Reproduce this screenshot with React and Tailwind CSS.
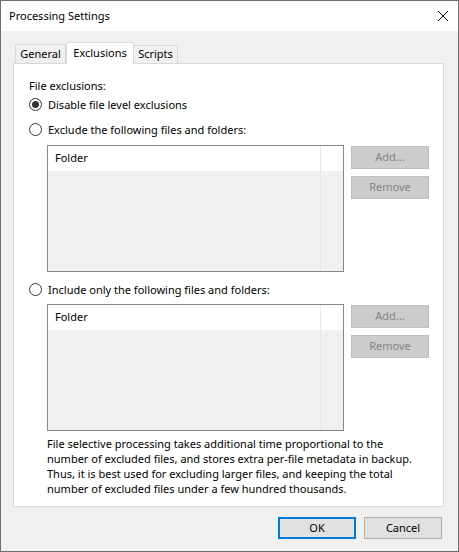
import React from "react";

const font = { fontFamily: '"Noto Sans", "Segoe UI", sans-serif' };

const Radio = ({ checked, label }) => (
  <div className="flex items-center h-[15px]">
    <div className="w-[13px] h-[13px] rounded-full border border-[#333333] bg-white flex items-center justify-center">
      {checked && <div className="w-[7px] h-[7px] rounded-full bg-[#333333]"></div>}
    </div>
    <span className="ml-[6px] leading-[15px]">{label}</span>
  </div>
);

const FolderList = () => (
  <div className="flex">
    <div className="ml-[18px] w-[297px] h-[127px] border border-[#828790] bg-[#f0f0f0] flex">
      <div className="w-[272px] flex flex-col">
        <div className="h-[25px] bg-white flex items-center pl-[7px]">Folder</div>
      </div>
      <div className="w-px bg-[#e3e8ee]"></div>
      <div className="flex-1 flex flex-col">
        <div className="h-[25px] bg-white"></div>
      </div>
    </div>
    <div className="ml-[7px] mt-px flex flex-col gap-[7px]">
      <button className="w-[78px] h-[23px] bg-[#cccccc] border border-[#bfbfbf] text-[#838383]">
        Add...
      </button>
      <button className="w-[78px] h-[23px] bg-[#cccccc] border border-[#bfbfbf] text-[#838383]">
        Remove
      </button>
    </div>
  </div>
);

export default function App() {
  return (
    <div
      className="w-[459px] h-[552px] border border-[#6e6e6e] flex flex-col text-[11px] text-black"
      style={font}
    >
      {/* Title bar */}
      <div className="h-[30px] bg-white flex items-center justify-between pl-[8px] pr-[9px]">
        <span className="text-[11px]">Processing Settings</span>
        <svg width="12" height="12" viewBox="0 0 12 12">
          <path d="M1 1 L11 11 M11 1 L1 11" stroke="#111" strokeWidth="1" />
        </svg>
      </div>

      <div className="flex-1 bg-[#f0f0f0] flex flex-col pl-[12px] pr-[14px]">
        {/* Tabs */}
        <div className="mt-[11px] flex items-end h-[21px] pl-[2px]">
          <div className="w-[51px] h-[19px] border border-b-0 border-[#d9d9d9] bg-[#f0f0f0] flex items-center justify-center">
            General
          </div>
          <div className="w-[68px] h-[22px] -mb-px border border-b-0 border-[#d9d9d9] bg-white flex items-center justify-center relative z-10">
            Exclusions
          </div>
          <div className="w-[44px] h-[18px] border border-b-0 border-l-0 border-[#d9d9d9] bg-[#f0f0f0] flex items-center justify-center">
            Scripts
          </div>
        </div>

        {/* Panel */}
        <div className="h-[444px] border border-[#d9d9d9] bg-white pl-[15px] pt-[14px]">
          <div className="leading-[15px] h-[15px]">File exclusions:</div>
          <div className="mt-[4px]">
            <Radio checked label="Disable file level exclusions" />
          </div>
          <div className="mt-[10px]">
            <Radio label="Exclude the following files and folders:" />
          </div>
          <div className="mt-[8px]">
            <FolderList />
          </div>
          <div className="mt-[10px]">
            <Radio label="Include only the following files and folders:" />
          </div>
          <div className="mt-[7px]">
            <FolderList />
          </div>
          <p className="mt-[5px] ml-[18px] leading-[15px] whitespace-nowrap">
            File selective processing takes additional time proportional to the
            <br />
            number of excluded files, and stores extra per-file metadata in backup.
            <br />
            Thus, it is best used for excluding larger files, and keeping the total
            <br />
            number of excluded files under a few hundred thousands.
          </p>
        </div>

        {/* Footer */}
        <div className="mt-[10px] flex justify-end gap-[8px] pr-[2px]">
          <button className="w-[78px] h-[22px] bg-[#e1e1e1] border-2 border-[#0078d7]">
            OK
          </button>
          <button className="w-[78px] h-[22px] bg-[#e1e1e1] border border-[#adadad]">
            Cancel
          </button>
        </div>
      </div>
    </div>
  );
}
